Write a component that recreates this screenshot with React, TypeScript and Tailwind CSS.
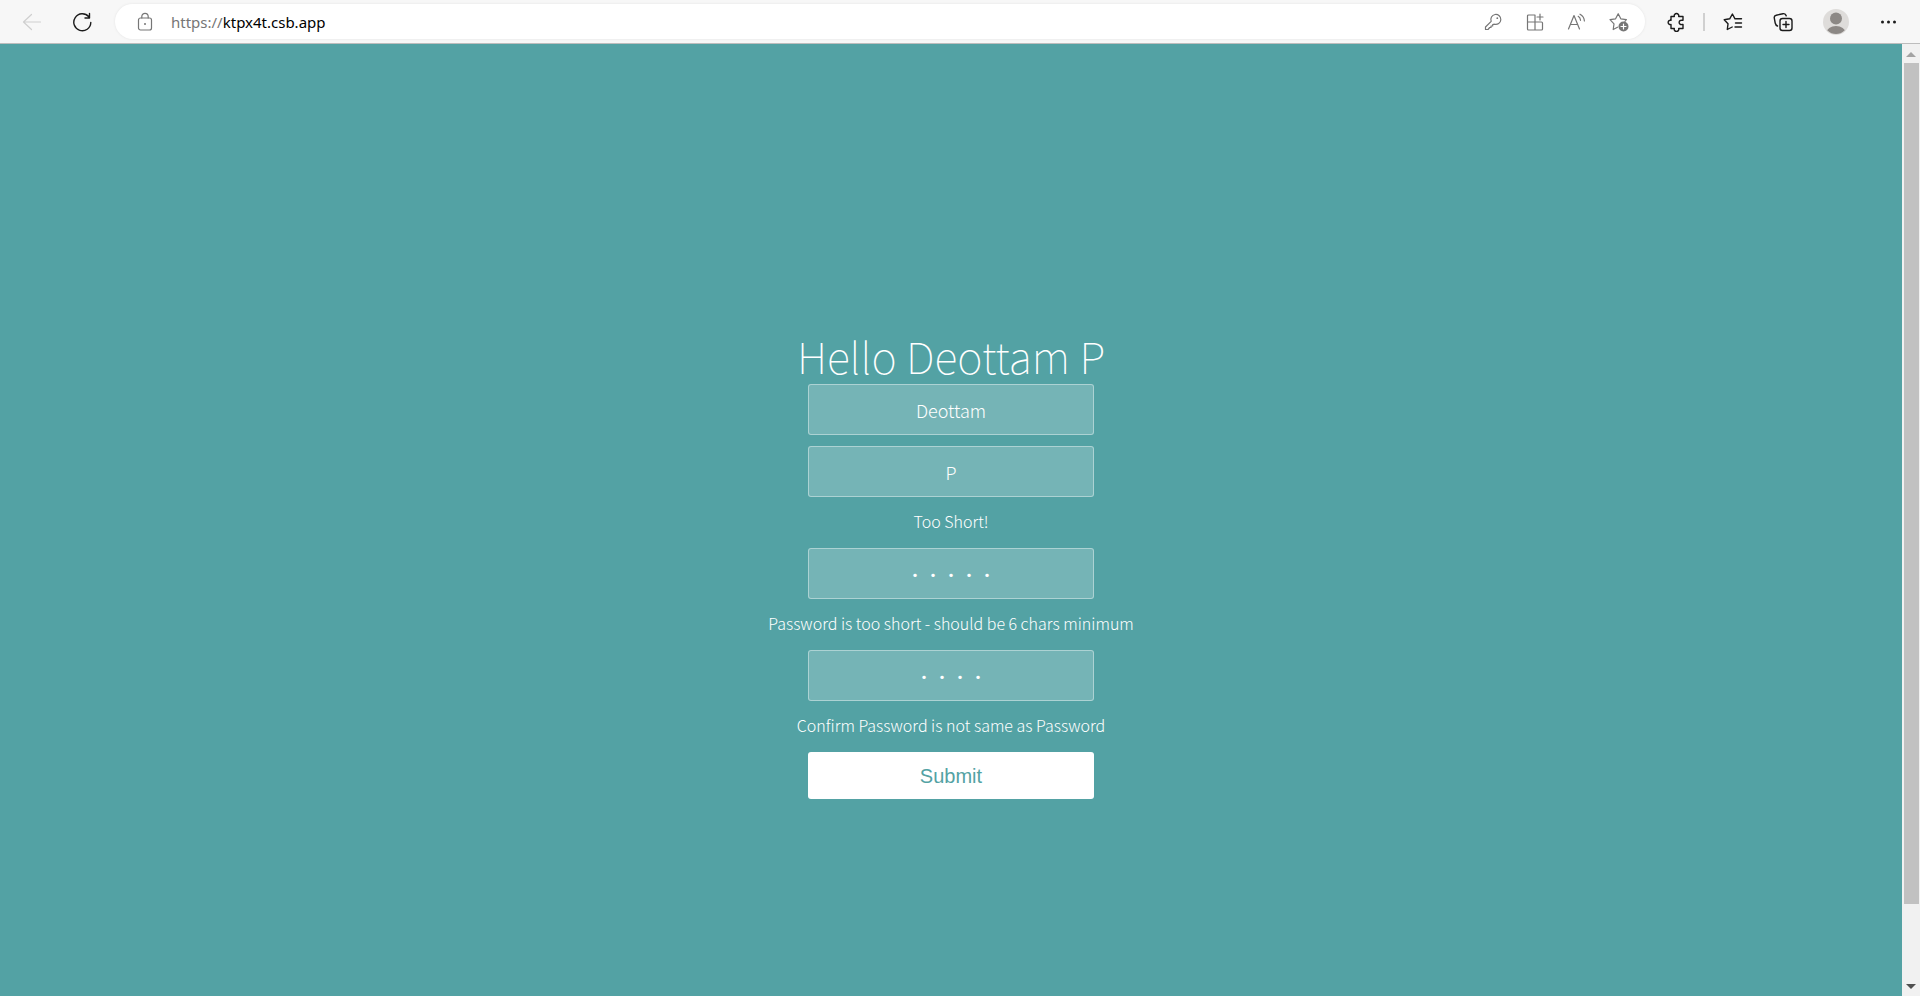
import { useState } from "react";
import type { ReactNode } from "react";

function Icon({ children }: { children: ReactNode }) {
  return (
    <svg
      className="size-5 shrink-0"
      viewBox="0 0 20 20"
      fill="none"
      stroke="currentColor"
      strokeWidth="1.2"
      strokeLinecap="round"
      strokeLinejoin="round"
      aria-hidden="true"
    >
      {children}
    </svg>
  );
}

function IconButton({ label, children }: { label: string; children: ReactNode }) {
  return (
    <button type="button" aria-label={label} className="shrink-0">
      {children}
    </button>
  );
}

function Toolbar() {
  return (
    <header className="flex h-11 shrink-0 items-center border-b border-[#bdbdbd] bg-[#f7f7f7] px-[22px] text-[#1b1b1b]">
      <button type="button" aria-label="Back" disabled className="shrink-0 text-[#cfcfcf]">
        <Icon>
          <path d="M18.5 10H1.5M9.5 2.5L1.5 10l8 7.500" />
        </Icon>
      </button>
      <button type="button" aria-label="Refresh" className="ml-[30px] shrink-0">
        <Icon>
          <path strokeWidth="1.4" d="M18.800 10.500A8.500 8.500 0 1 1 16.800 4.800M17.500 1.500V6h-4.500" />
        </Icon>
      </button>
      <div className="ml-[23px] flex h-[35px] min-w-0 flex-1 items-center rounded-full bg-white pr-4 pl-5 text-[#767676] shadow-[0_0_3px_rgba(0,0,0,0.08)]">
        <Icon>
          <rect x="3.500" y="6" width="13" height="12" rx="2" />
          <path d="M6.800 6V4.500a3.200 3.200 0 0 1 6.400 0V6" />
          <circle cx="10" cy="12" r="1" fill="currentColor" stroke="none" />
        </Icon>
        <a
          href="https://ktpx4t.csb.app"
          className="ml-4 flex-1 truncate font-['Noto_Sans','Open_Sans',sans-serif] text-[15px] leading-5 text-[#767676]"
        >
          https://<span className="text-black">ktpx4t.csb.app</span>
        </a>
        <div className="flex items-center gap-[22px]">
          <IconButton label="Saved passwords">
            <Icon>
              <path d="M8.200 9.300A5 5 0 1 1 11.400 12.200L9.700 12.600V14H8v1.500H6.700L5 17.500H2.500V15z" />
              <circle cx="14.300" cy="6.200" r="0.900" fill="currentColor" stroke="none" />
            </Icon>
          </IconButton>
          <IconButton label="Apps">
            <Icon>
              <path d="M10 10V3H3.500A1 1 0 0 0 2.500 4v13a1 1 0 0 0 1 1h13a1 1 0 0 0 1-1v-6a1 1 0 0 0-1-1zM2.500 10H10v8M15 2v6M12 5h6" />
            </Icon>
          </IconButton>
          <IconButton label="Read aloud">
            <Icon>
              <path d="M1.500 17L7 3.500 12.500 17M3.500 12.500h7M11.200 4.300c1.500.9 2.200 2.200 2.300 4M13 2.200c2.800 1.500 4.200 3.700 4.400 6.800" />
            </Icon>
          </IconButton>
          <IconButton label="Add to favorites">
            <Icon>
              <path d="M8.500 15.200L4.200 17.500 5 11.800 1 7.700l5.600-.9L9.200 1.700l2.600 5.100 5.600.9-1.500 1.600" />
              <circle cx="14.500" cy="14.500" r="5" fill="currentColor" stroke="none" />
              <path stroke="white" d="M14.500 12v5M12 14.500h5" />
            </Icon>
          </IconButton>
        </div>
      </div>
      <button type="button" aria-label="Extensions" className="ml-[21px] shrink-0">
        <Icon>
          <path
            strokeWidth="1.4"
            d="M5 4.500H8.300A2.300 2.300 0 1 1 12.700 4.500H17V8.300H16A2.200 2.200 0 1 0 16 12.500H17V16.500H12.700A2.300 2.300 0 1 1 8.300 16.500H5V12.500A2.200 2.200 0 1 1 5 8.300Z"
          />
        </Icon>
      </button>
      <div className="ml-[17px] h-[18px] w-0.5 shrink-0 bg-[#d0d0d0]" />
      <button type="button" aria-label="Favorites" className="ml-[18px] shrink-0">
        <Icon>
          <path
            strokeWidth="1.400"
            d="M9.200 15L4.300 17.500 5 11.800 1.200 7.700l5.500-.9L9.400 2l2.600 4.800H18.500M12.500 11h6M12 15h6.500"
          />
        </Icon>
      </button>
      <button type="button" aria-label="Collections" className="ml-[30px] shrink-0">
        <Icon>
          <path
            strokeWidth="1.400"
            d="M4.500 14C3 13.500 2.500 12.500 2.200 11L1.300 6.200C1 4.600 1.800 3.500 3.200 3.200L10 1.700C11.500 1.400 12.700 2 13.200 3.800"
          />
          <rect strokeWidth="1.400" x="7" y="6.500" width="12" height="12" rx="2.500" />
          <path strokeWidth="1.400" d="M13 9.500v6M10 12.500h6" />
        </Icon>
      </button>
      <button type="button" aria-label="Profile" className="ml-[30px] shrink-0">
        <svg className="size-[26px]" viewBox="0 0 26 26" aria-hidden="true">
          <defs>
            <clipPath id="avatar-clip">
              <circle cx="13" cy="13" r="12" />
            </clipPath>
          </defs>
          <circle cx="13" cy="13" r="13" fill="#dedcda" />
          <circle cx="13" cy="9.500" r="6" fill="#8c8885" />
          <ellipse cx="13" cy="23.500" rx="9.500" ry="6.500" fill="#8c8885" clipPath="url(#avatar-clip)" />
        </svg>
      </button>
      <button type="button" aria-label="Settings and more" className="ml-[29px] shrink-0">
        <svg className="size-5" viewBox="0 0 20 20" fill="currentColor" aria-hidden="true">
          <circle cx="4.500" cy="10" r="1.500" />
          <circle cx="10.500" cy="10" r="1.500" />
          <circle cx="16.500" cy="10" r="1.500" />
        </svg>
      </button>
    </header>
  );
}

interface FieldProps {
  id: string;
  label: string;
  type?: "text" | "password";
  value: string;
  onChange: (value: string) => void;
  error?: string;
}

function Field({ id, label, type = "text", value, onChange, error }: FieldProps) {
  return (
    <div className="flex flex-col items-center">
      <label htmlFor={id} className="sr-only">
        {label}
      </label>
      <input
        id={id}
        type={type}
        value={value}
        onChange={(event) => onChange(event.target.value)}
        className="h-[51px] w-[286px] rounded-[3px] border border-white/40 bg-white/20 px-4 text-center text-[18px] font-light text-white outline-none"
      />
      {error && <p className="mt-3 h-[28px] text-[16px] leading-6 whitespace-nowrap">{error}</p>}
    </div>
  );
}

function ScrollBar() {
  return (
    <div className="flex w-[18px] shrink-0 flex-col items-center bg-[#f1f1f1]" aria-hidden="true">
      <svg className="h-[19px] w-[18px] shrink-0" viewBox="0 0 18 19" fill="#a3a3a3">
        <path d="M9 8l5 5H4z" />
      </svg>
      <div className="min-h-0 w-full flex-1 pr-px pl-0.5">
        <div className="h-[92%] bg-[#c1c1c1]" />
      </div>
      <svg className="h-[19px] w-[18px] shrink-0" viewBox="0 0 18 19" fill="#505050">
        <path d="M9 12L4 7h10z" />
      </svg>
    </div>
  );
}

export default function App() {
  const [firstName, setFirstName] = useState("Deottam");
  const [lastName, setLastName] = useState("P");
  const [password, setPassword] = useState("12345");
  const [confirm, setConfirm] = useState("1234");

  return (
    <div className="flex h-screen flex-col overflow-hidden">
      <Toolbar />
      <div className="flex min-h-0 flex-1">
        <main className="flex min-w-0 flex-1 flex-col items-center bg-[#53a2a4] pt-[282px] font-['Noto_Sans_CJK_SC',sans-serif] font-light text-white">
          <h1 className="h-[58px] text-[43px] leading-[58px] font-thin whitespace-nowrap">
            Hello {firstName} {lastName}
          </h1>
          <form className="flex flex-col items-center gap-[11px]" onSubmit={(event) => event.preventDefault()}>
            <Field id="first-name" label="First name" value={firstName} onChange={setFirstName} />
            <Field id="last-name" label="Last name" value={lastName} onChange={setLastName} error="Too Short!" />
            <Field
              id="password"
              label="Password"
              type="password"
              value={password}
              onChange={setPassword}
              error="Password is too short - should be 6 chars minimum"
            />
            <Field
              id="confirm-password"
              label="Confirm password"
              type="password"
              value={confirm}
              onChange={setConfirm}
              error="Confirm Password is not same as Password"
            />
            <button
              type="submit"
              className="h-[47px] w-[286px] rounded-[3px] bg-white font-['Liberation_Sans',Arial,sans-serif] text-[20px] font-normal text-[#53a2a4]"
            >
              Submit
            </button>
          </form>
        </main>
        <ScrollBar />
      </div>
    </div>
  );
}
